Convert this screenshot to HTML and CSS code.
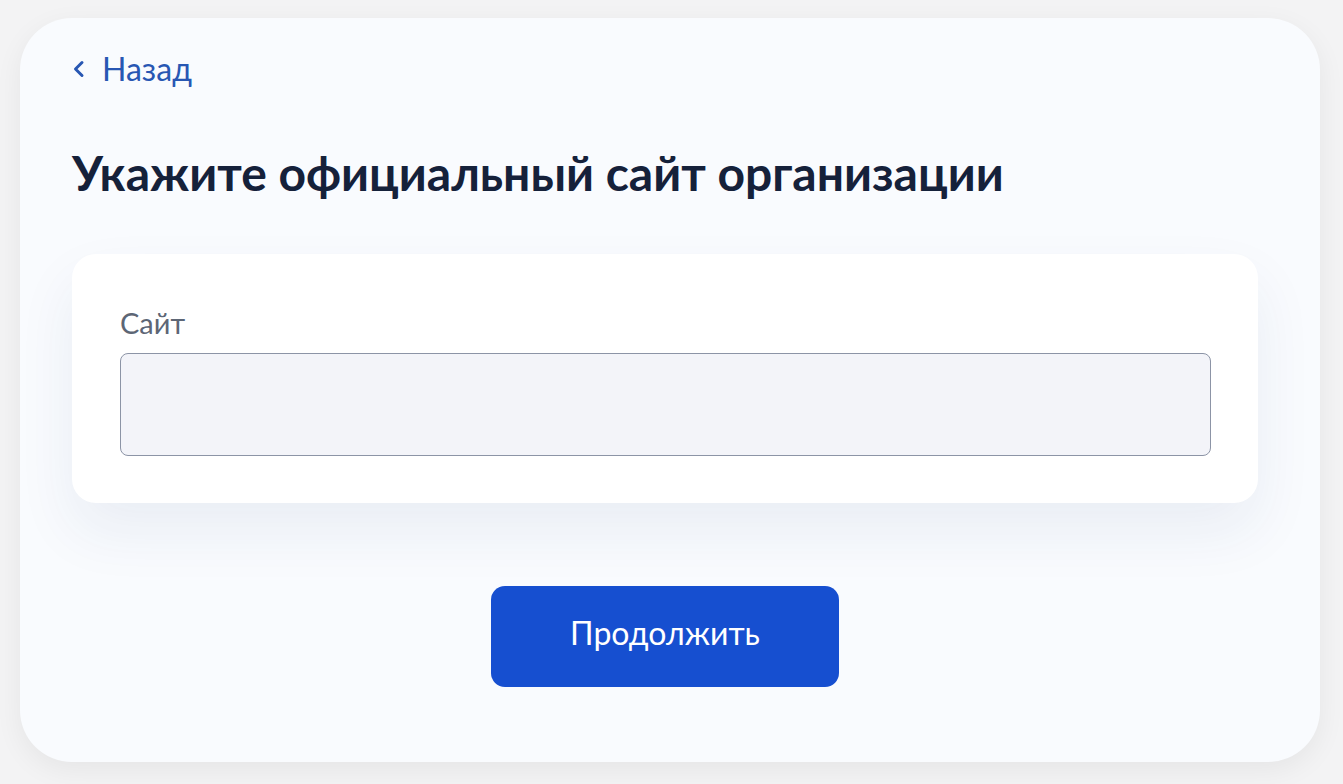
FILE: index.html
```html
<!DOCTYPE html>
<html lang="ru">
<head>
<meta charset="utf-8">
<link rel="stylesheet" href="styles.css">
</head>
<body>
<div class="page">
  <div class="panel">
    <a class="back" href="#">
      <svg class="back-icon" width="14" height="18" viewBox="0 0 14 18"><path d="M11 2.5 L4.5 9 L11 15.5" fill="none" stroke="#2857b3" stroke-width="3" stroke-linecap="round" stroke-linejoin="round"/></svg>
      <span>Назад</span>
    </a>
    <h1 class="title">Укажите официальный сайт организации</h1>
    <div class="card">
      <label class="label" for="site">Сайт</label>
      <input class="input" id="site" type="text">
    </div>
    <div class="actions">
      <button class="btn">Продолжить</button>
    </div>
  </div>
</div>
</body>
</html>
```
FILE: styles.css
```css
html, body {
  margin: 0;
  padding: 0;
}
body {
  background: #f3f3f4;
  font-family: Lato, "Noto Sans", sans-serif;
  width: 1343px;
  height: 784px;
  overflow: hidden;
}
.page {
  padding: 18px 23px 22px 20px;
}
.panel {
  background: #f9fbfe;
  border-radius: 52px;
  height: 744px;
  box-sizing: border-box;
  padding: 31px 62px 0 51px;
  box-shadow: 0 8px 28px rgba(0, 0, 0, 0.06);
}
.back {
  display: inline-flex;
  align-items: center;
  gap: 17px;
  color: #2857b3;
  text-decoration: none;
  font-size: 32px;
  line-height: 40px;
}
.back-icon {
  display: block;
}
.title {
  margin: 55px 0 0 1px;
  font-size: 48px;
  font-weight: 700;
  line-height: 58px;
  color: #15213a;
  letter-spacing: 0;
}
.card {
  margin: 52px 0 0 1px;
  background: #ffffff;
  border-radius: 24px;
  padding: 52px 47px 47px 48px;
  box-shadow: 0 28px 60px rgba(30, 50, 110, 0.07);
}
.label {
  display: block;
  font-size: 29px;
  line-height: 34px;
  color: #5d6675;
  margin-bottom: 13px;
}
.input {
  display: block;
  width: 100%;
  box-sizing: border-box;
  height: 103px;
  border: 1.5px solid #8c94a6;
  border-radius: 8px;
  background: #f3f4f9;
  font-family: inherit;
  font-size: 26px;
  padding: 0 20px;
  outline: none;
}
.actions {
  display: flex;
  justify-content: center;
  margin-top: 83px;
  padding-left: 1px;
}
.btn {
  width: 348px;
  height: 101px;
  border: none;
  border-radius: 14px;
  background: #164fd0;
  color: #ffffff;
  font-family: inherit;
  font-size: 32px;
  padding: 0 0 8px 0;
  cursor: pointer;
}
```
